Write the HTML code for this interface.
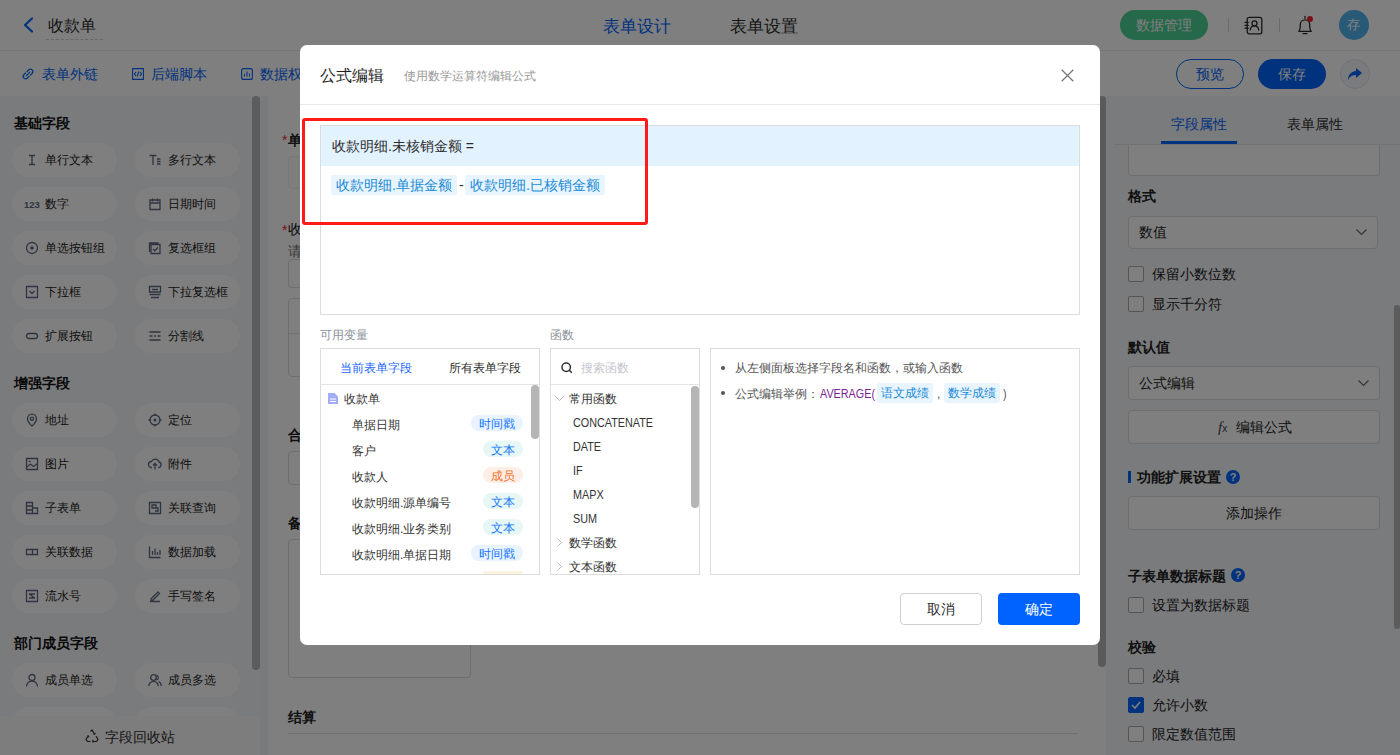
<!DOCTYPE html>
<html><head><meta charset="utf-8">
<style>
*{box-sizing:border-box;margin:0;padding:0}
html,body{width:1400px;height:755px;overflow:hidden;background:#fff}
body{font-family:"Liberation Sans",sans-serif;color:#2c2c2c;position:relative}
.a{position:absolute}
.t{position:absolute;white-space:nowrap}
svg{position:absolute;overflow:visible}
#hdr{left:0;top:0;width:1400px;height:51px;background:#fff;border-bottom:1px solid #ececec}
#tb{left:0;top:51px;width:1400px;height:45px;background:#fff;box-shadow:0 1px 2px rgba(0,0,0,.04)}
#lp{left:0;top:96px;width:260px;height:659px;background:#f5f6fa}
#lstrip{left:260px;top:96px;width:8px;height:659px;background:#f3f4f7}
#lsb{left:252px;top:96px;width:8px;height:574px;background:#b8b8b8;border-radius:4px}
#canvas{left:268px;top:96px;width:830px;height:659px;background:#fff}
#csb{left:1098px;top:96px;width:8px;height:571px;background:#b4b4b4;border-radius:4px}
#rp{left:1106px;top:96px;width:294px;height:659px;background:#f5f6fa}
#rsb{left:1394px;top:305px;width:6px;height:324px;background:#b8b8b8;border-radius:3px}
.pill{position:absolute;width:105px;height:34px;border-radius:17px;background:#fff}
.pt{position:absolute;font-size:12px;line-height:34px;height:34px;white-space:nowrap;color:#222}
.sec{position:absolute;font-size:14px;font-weight:bold;line-height:20px;white-space:nowrap;color:#111}
.ico{position:absolute;width:14px;height:14px}
#mask{left:0;top:0;width:1400px;height:755px;background:rgba(0,0,0,.5)}
#modal{left:300px;top:45px;width:800px;height:600px;background:#fff;border-radius:7px}
.box{position:absolute;border:1px solid #dcdcdc;background:#fff}
.chip{position:absolute;height:20px;line-height:20px;padding:0 5px;background:#e8f4fe;color:#1a8bd6;font-size:14px;border-radius:2px;white-space:nowrap}
.tag{position:absolute;height:16px;line-height:18px;overflow:hidden;border-radius:8px;font-size:12px;text-align:center;white-space:nowrap}
.vr{position:absolute;left:352px;font-size:12px;line-height:20px;color:#333;white-space:nowrap}
.fn{position:absolute;font-size:12px;line-height:20px;color:#333;white-space:nowrap}
.cb{position:absolute;width:16px;height:16px;border:1px solid #aaa;border-radius:2px;background:#fff}
.rt{position:absolute;font-size:14px;line-height:20px;color:#222;white-space:nowrap}
.rb{position:absolute;font-size:14px;font-weight:bold;line-height:20px;color:#222;white-space:nowrap}
.lat{display:inline-block;transform:scaleX(0.9);transform-origin:0 50%}
.inp{position:absolute;border:1px solid #dcdcdc;border-radius:4px;background:#fff}
</style></head>
<body>

<div id="hdr" class="a"></div>
<svg style="left:22px;top:17px" width="12" height="16" viewBox="0 0 12 16"><path d="M10 1.5 L3 8 L10 14.5" fill="none" stroke="#0064fa" stroke-width="2.2" stroke-linecap="round" stroke-linejoin="round"/></svg>
<div class="t" style="left:48px;top:16px;font-size:16px;line-height:20px;color:#2c2c2c">收款单</div>
<div class="a" style="left:46px;top:39px;width:57px;height:0;border-top:1px dashed #d0d0d0"></div>
<div class="t" style="left:603px;top:18px;font-size:17px;line-height:18px;color:#0064fa">表单设计</div>
<div class="t" style="left:730px;top:18px;font-size:17px;line-height:18px;color:#2c2c2c">表单设置</div>
<div class="a" style="left:1120px;top:10px;width:88px;height:30px;border-radius:15px;background:#4ad094"></div>
<div class="t" style="left:1136px;top:15px;font-size:14px;line-height:20px;color:#fff">数据管理</div>
<div class="a" style="left:1228px;top:18px;width:1px;height:14px;background:#d8d8d8"></div>
<div class="a" style="left:1279px;top:18px;width:1px;height:14px;background:#d8d8d8"></div>
<svg style="left:1244px;top:16px" width="19" height="19" viewBox="0 0 19 19"><rect x="3.2" y="1.4" width="14.6" height="16.4" rx="2" fill="none" stroke="#2a2a2a" stroke-width="1.3"/><circle cx="10.5" cy="7.3" r="2.5" fill="none" stroke="#2a2a2a" stroke-width="1.3"/><path d="M6.3 14a4.2 4.2 0 0 1 8.4 0M1 6.4h3.2M1 9.3h3.2M1 12.2h3.2" fill="none" stroke="#2a2a2a" stroke-width="1.3" stroke-linecap="round"/></svg>
<svg style="left:1297px;top:15px" width="16" height="20" viewBox="0 0 16 20"><path d="M1.8 16.3C3.2 15.2 3.3 13 3.3 9.5a4.7 4.7 0 0 1 9.4 0c0 3.5 0.1 5.7 1.5 6.8z" fill="none" stroke="#2a2a2a" stroke-width="1.3" stroke-linejoin="round"/><path d="M8 1.3v2M6 18.6h4" fill="none" stroke="#2a2a2a" stroke-width="1.3" stroke-linecap="round"/></svg>
<div class="a" style="left:1307px;top:16px;width:6px;height:6px;border-radius:50%;background:#f5222d"></div>
<div class="a" style="left:1339px;top:10px;width:30px;height:30px;border-radius:15px;background:#50b2ee"></div>
<div class="t" style="left:1347px;top:15px;font-size:13px;line-height:20px;color:#fff">存</div>

<div id="tb" class="a"></div>
<svg style="left:22px;top:68px" width="12" height="12" viewBox="0 0 12 12"><path d="M5 3.5l1.6-1.6a2.4 2.4 0 0 1 3.5 3.5L8.5 7M7 8.5L5.4 10.1a2.4 2.4 0 0 1-3.5-3.5L3.5 5M4.2 7.8l3.6-3.6" fill="none" stroke="#0064fa" stroke-width="1.2" stroke-linecap="round"/></svg>
<div class="t" style="left:42px;top:64px;font-size:14px;line-height:20px;color:#0064fa">表单外链</div>
<svg style="left:132px;top:68px" width="12" height="12" viewBox="0 0 12 12"><path d="M0.6 0.6h10.8v10.8H0.6zM4 4L2.5 6 4 8M8 4l1.5 2L8 8M6.8 3.5L5.2 8.5" fill="none" stroke="#0064fa" stroke-width="1.1"/></svg>
<div class="t" style="left:151px;top:64px;font-size:14px;line-height:20px;color:#0064fa">后端脚本</div>
<svg style="left:241px;top:68px" width="12" height="12" viewBox="0 0 12 12"><rect x="0.6" y="0.6" width="10.8" height="10.8" rx="2" fill="none" stroke="#0064fa" stroke-width="1.1"/><path d="M3.5 8.5V6M6 8.5V3.5M8.5 8.5V5.5" fill="none" stroke="#0064fa" stroke-width="1.1"/></svg>
<div class="t" style="left:260px;top:64px;font-size:14px;line-height:20px;color:#0064fa">数据权限</div>
<div class="a" style="left:1176px;top:59px;width:68px;height:30px;border-radius:15px;border:1px solid #0064fa;background:#fff"></div>
<div class="t" style="left:1196px;top:64px;font-size:14px;line-height:20px;color:#0064fa">预览</div>
<div class="a" style="left:1258px;top:59px;width:68px;height:30px;border-radius:15px;background:#0064fa"></div>
<div class="t" style="left:1278px;top:64px;font-size:14px;line-height:20px;color:#fff">保存</div>
<div class="a" style="left:1340px;top:59px;width:30px;height:30px;border-radius:15px;border:1px solid #dfe3ee;background:#f4f6fb"></div>
<svg style="left:1347px;top:67px" width="16" height="14" viewBox="0 0 16 14"><path d="M9 1l6 5-6 5V8C5 8 2.5 9.5 1 13c0-5 3-8.5 8-9z" fill="#0064fa"/></svg>

<div id="lp" class="a"></div>
<div id="lstrip" class="a"></div>
<div id="lsb" class="a"></div>
<div class="sec" style="left:14px;top:113px">基础字段</div>
<div class="sec" style="left:14px;top:373px">增强字段</div>
<div class="sec" style="left:14px;top:633px">部门成员字段</div>

<div class="pill" style="left:12px;top:143px"></div>
<svg class="ico" style="left:25px;top:153px" width="14" height="14" viewBox="0 0 14 14"><path d="M4 2.5h6M4 11.5h6M7 2.5v9" fill="none" stroke="#5d6a80" stroke-width="1.3"/></svg>
<div class="pt" style="left:45px;top:143px">单行文本</div>
<div class="pill" style="left:135px;top:143px"></div>
<svg class="ico" style="left:148px;top:153px" width="14" height="14" viewBox="0 0 14 14"><path d="M1.5 2.5h7M5 2.5v9.5M9 6h3.5M9 8.5h3.5M9 11h3.5" fill="none" stroke="#5d6a80" stroke-width="1.3"/></svg>
<div class="pt" style="left:168px;top:143px">多行文本</div>
<div class="pill" style="left:12px;top:187px"></div>
<svg class="ico" style="left:25px;top:197px" width="14" height="14" viewBox="0 0 14 14"><text x="-1" y="10.5" font-size="9.5" font-weight="bold" fill="#5d6a80" font-family="Liberation Sans">123</text></svg>
<div class="pt" style="left:45px;top:187px">数字</div>
<div class="pill" style="left:135px;top:187px"></div>
<svg class="ico" style="left:148px;top:197px" width="14" height="14" viewBox="0 0 14 14"><path d="M2 3h10v9.5H2zM2 6h10M4.5 1.5v3M9.5 1.5v3" fill="none" stroke="#5d6a80" stroke-width="1.3"/></svg>
<div class="pt" style="left:168px;top:187px">日期时间</div>
<div class="pill" style="left:12px;top:231px"></div>
<svg class="ico" style="left:25px;top:241px" width="14" height="14" viewBox="0 0 14 14"><circle cx="7" cy="7" r="5.5" fill="none" stroke="#5d6a80" stroke-width="1.3"/><circle cx="7" cy="7" r="1.8" fill="#5d6a80"/></svg>
<div class="pt" style="left:45px;top:231px">单选按钮组</div>
<div class="pill" style="left:135px;top:231px"></div>
<svg class="ico" style="left:148px;top:241px" width="14" height="14" viewBox="0 0 14 14"><path d="M3 3.5h9v9H3zM1.5 11V2h9" fill="none" stroke="#5d6a80" stroke-width="1.3"/><path d="M5 8l1.8 1.8L10 6.5" fill="none" stroke="#5d6a80" stroke-width="1.3"/></svg>
<div class="pt" style="left:168px;top:231px">复选框组</div>
<div class="pill" style="left:12px;top:275px"></div>
<svg class="ico" style="left:25px;top:285px" width="14" height="14" viewBox="0 0 14 14"><path d="M1.5 1.5h11v11h-11zM4.5 6l2.5 2.5L9.5 6" fill="none" stroke="#5d6a80" stroke-width="1.3"/></svg>
<div class="pt" style="left:45px;top:275px">下拉框</div>
<div class="pill" style="left:135px;top:275px"></div>
<svg class="ico" style="left:148px;top:285px" width="14" height="14" viewBox="0 0 14 14"><path d="M1.5 1.5h11v5.5h-11zM1.5 9.5h11M4 4.5h6M3 12.5h8" fill="none" stroke="#5d6a80" stroke-width="1.3"/></svg>
<div class="pt" style="left:168px;top:275px">下拉复选框</div>
<div class="pill" style="left:12px;top:319px"></div>
<svg class="ico" style="left:25px;top:329px" width="14" height="14" viewBox="0 0 14 14"><rect x="1.5" y="4.5" width="11" height="5" rx="2.5" fill="none" stroke="#5d6a80" stroke-width="1.3"/></svg>
<div class="pt" style="left:45px;top:319px">扩展按钮</div>
<div class="pill" style="left:135px;top:319px"></div>
<svg class="ico" style="left:148px;top:329px" width="14" height="14" viewBox="0 0 14 14"><path d="M1.5 3h11M1.5 7h3M6 7h2M9.5 7h3M1.5 11h11" fill="none" stroke="#5d6a80" stroke-width="1.3"/></svg>
<div class="pt" style="left:168px;top:319px">分割线</div>
<div class="pill" style="left:12px;top:403px"></div>
<svg class="ico" style="left:25px;top:413px" width="14" height="14" viewBox="0 0 14 14"><path d="M7 13s-4.5-4.2-4.5-7.3A4.5 4.5 0 0 1 11.5 5.7C11.5 8.8 7 13 7 13z" fill="none" stroke="#5d6a80" stroke-width="1.3"/><circle cx="7" cy="5.8" r="1.6" fill="none" stroke="#5d6a80" stroke-width="1.3"/></svg>
<div class="pt" style="left:45px;top:403px">地址</div>
<div class="pill" style="left:135px;top:403px"></div>
<svg class="ico" style="left:148px;top:413px" width="14" height="14" viewBox="0 0 14 14"><circle cx="7" cy="7" r="5" fill="none" stroke="#5d6a80" stroke-width="1.3"/><circle cx="7" cy="7" r="1.5" fill="#5d6a80"/><path d="M7 0.5v2.5M7 11v2.5M0.5 7h2.5M11 7h2.5" fill="none" stroke="#5d6a80" stroke-width="1.3"/></svg>
<div class="pt" style="left:168px;top:403px">定位</div>
<div class="pill" style="left:12px;top:447px"></div>
<svg class="ico" style="left:25px;top:457px" width="14" height="14" viewBox="0 0 14 14"><path d="M1.5 1.5h11v11h-11z" fill="none" stroke="#5d6a80" stroke-width="1.3"/><path d="M2 10l3.5-3 3 2.5 4-3" fill="none" stroke="#5d6a80" stroke-width="1.3"/><path d="M3.5 4.5h2" fill="none" stroke="#5d6a80" stroke-width="1.3"/></svg>
<div class="pt" style="left:45px;top:447px">图片</div>
<div class="pill" style="left:135px;top:447px"></div>
<svg class="ico" style="left:148px;top:457px" width="14" height="14" viewBox="0 0 14 14"><path d="M4 10.5H3.5a3 3 0 0 1 0-6 4 4 0 0 1 7.5 0.5 2.8 2.8 0 0 1-0.5 5.5H10M7 12.5V6.5M5 8.5l2-2 2 2" fill="none" stroke="#5d6a80" stroke-width="1.3"/></svg>
<div class="pt" style="left:168px;top:447px">附件</div>
<div class="pill" style="left:12px;top:491px"></div>
<svg class="ico" style="left:25px;top:501px" width="14" height="14" viewBox="0 0 14 14"><path d="M1.5 1.5h6v11h-6zM7.5 7h5v5.5h-5M1.5 5h6M1.5 9h6" fill="none" stroke="#5d6a80" stroke-width="1.3"/></svg>
<div class="pt" style="left:45px;top:491px">子表单</div>
<div class="pill" style="left:135px;top:491px"></div>
<svg class="ico" style="left:148px;top:501px" width="14" height="14" viewBox="0 0 14 14"><path d="M1.5 1.5h11v11h-11z" fill="none" stroke="#5d6a80" stroke-width="1.3"/><path d="M4 4h4v3H4zM7 7h3v3H7" fill="none" stroke="#5d6a80" stroke-width="1.3"/></svg>
<div class="pt" style="left:168px;top:491px">关联查询</div>
<div class="pill" style="left:12px;top:535px"></div>
<svg class="ico" style="left:25px;top:545px" width="14" height="14" viewBox="0 0 14 14"><path d="M1.5 4.5h6v5h-6zM6.5 4.5h6v5h-6" fill="none" stroke="#5d6a80" stroke-width="1.3"/></svg>
<div class="pt" style="left:45px;top:535px">关联数据</div>
<div class="pill" style="left:135px;top:535px"></div>
<svg class="ico" style="left:148px;top:545px" width="14" height="14" viewBox="0 0 14 14"><path d="M1.5 1.5v11h11M4.5 10V6M7 10V3.5M9.5 10V7M12 10V5" fill="none" stroke="#5d6a80" stroke-width="1.3"/></svg>
<div class="pt" style="left:168px;top:535px">数据加载</div>
<div class="pill" style="left:12px;top:579px"></div>
<svg class="ico" style="left:25px;top:589px" width="14" height="14" viewBox="0 0 14 14"><path d="M1.5 1.5h11v11h-11zM4 5h6M4 9h6M4 5l6 4" fill="none" stroke="#5d6a80" stroke-width="1.3"/></svg>
<div class="pt" style="left:45px;top:579px">流水号</div>
<div class="pill" style="left:135px;top:579px"></div>
<svg class="ico" style="left:148px;top:589px" width="14" height="14" viewBox="0 0 14 14"><path d="M2 12.5h10M3 10l7-7 1.5 1.5-7 7H3z" fill="none" stroke="#5d6a80" stroke-width="1.3"/></svg>
<div class="pt" style="left:168px;top:579px">手写签名</div>
<div class="pill" style="left:12px;top:663px"></div>
<svg class="ico" style="left:25px;top:673px" width="14" height="14" viewBox="0 0 14 14"><circle cx="7" cy="4.5" r="3" fill="none" stroke="#5d6a80" stroke-width="1.3"/><path d="M1.5 13.5a5.5 5.5 0 0 1 11 0" fill="none" stroke="#5d6a80" stroke-width="1.3"/></svg>
<div class="pt" style="left:45px;top:663px">成员单选</div>
<div class="pill" style="left:135px;top:663px"></div>
<svg class="ico" style="left:148px;top:673px" width="14" height="14" viewBox="0 0 14 14"><circle cx="5.5" cy="4.5" r="2.8" fill="none" stroke="#5d6a80" stroke-width="1.3"/><path d="M0.8 13a4.7 4.7 0 0 1 9.4 0M8.5 2a2.8 2.8 0 0 1 0 5.2M10.5 8.5a4.7 4.7 0 0 1 2.7 4.5" fill="none" stroke="#5d6a80" stroke-width="1.3"/></svg>
<div class="pt" style="left:168px;top:663px">成员多选</div>
<div class="pill" style="left:12px;top:707px"></div>
<svg class="ico" style="left:25px;top:717px" width="14" height="14" viewBox="0 0 14 14"><circle cx="7" cy="4.5" r="3" fill="none" stroke="#5d6a80" stroke-width="1.3"/><path d="M1.5 13.5a5.5 5.5 0 0 1 11 0" fill="none" stroke="#5d6a80" stroke-width="1.3"/></svg>
<div class="pt" style="left:45px;top:707px">部门单选</div>
<div class="pill" style="left:135px;top:707px"></div>
<svg class="ico" style="left:148px;top:717px" width="14" height="14" viewBox="0 0 14 14"><circle cx="5.5" cy="4.5" r="2.8" fill="none" stroke="#5d6a80" stroke-width="1.3"/><path d="M0.8 13a4.7 4.7 0 0 1 9.4 0M8.5 2a2.8 2.8 0 0 1 0 5.2M10.5 8.5a4.7 4.7 0 0 1 2.7 4.5" fill="none" stroke="#5d6a80" stroke-width="1.3"/></svg>
<div class="pt" style="left:168px;top:707px">部门多选</div>
<div class="a" style="left:0;top:716px;width:260px;height:39px;background:#fbfbfc"></div>
<svg style="left:85px;top:729px" width="14" height="14" viewBox="0 0 14 14"><path d="M5.5 2.5L7 1l2.5 4M11 7l2 3.5-1.5 2H8.5M5.5 12.5H2.5L1 10.5 3 7M10.5 4.2L9.5 5l-1.2-.2M7.5 11l1 1.5-1 1M2.5 6.5l.8 0.5.4 1.2" fill="none" stroke="#333" stroke-width="1.2"/></svg>
<div class="t" style="left:105px;top:727px;font-size:14px;line-height:20px;color:#2c2c2c">字段回收站</div>

<div id="canvas" class="a"></div>
<div class="t" style="left:282px;top:130px;font-size:14px;line-height:20px;color:#f5222d">*</div>
<div class="rb" style="left:288px;top:130px">单据日期</div>
<div class="inp" style="left:288px;top:156px;width:400px;height:33px;border-color:#f0f0f0;background:#fcfcfc"></div>
<div class="t" style="left:282px;top:220px;font-size:14px;line-height:20px;color:#f5222d">*</div>
<div class="rt" style="left:288px;top:219px;color:#111">收款明细</div>
<div class="t" style="left:288px;top:241px;font-size:14px;line-height:20px;color:#777">请</div>
<div class="inp" style="left:288px;top:259px;width:790px;height:29px"></div>
<div class="inp" style="left:288px;top:298px;width:790px;height:79px"></div>
<div class="a" style="left:289px;top:333px;width:788px;height:1px;background:#e6e6e6"></div>
<div class="rb" style="left:288px;top:425px">合计</div>
<div class="inp" style="left:288px;top:451px;width:400px;height:34px"></div>
<div class="rb" style="left:288px;top:513px">备注</div>
<div class="inp" style="left:288px;top:539px;width:183px;height:139px"></div>
<div class="rb" style="left:288px;top:707px">结算</div>
<div class="a" style="left:288px;top:733px;width:790px;height:1px;background:#e3e3e3"></div>
<div id="csb" class="a"></div>

<div id="rp" class="a"></div>
<div class="a" style="left:1114px;top:144px;width:286px;height:1px;background:#e4e4e4"></div>
<div class="t" style="left:1171px;top:114px;font-size:14px;line-height:20px;color:#0064fa">字段属性</div>
<div class="a" style="left:1161px;top:141px;width:76px;height:3px;background:#0064fa"></div>
<div class="t" style="left:1287px;top:114px;font-size:14px;line-height:20px;color:#2c2c2c">表单属性</div>
<div class="inp" style="left:1128px;top:145px;width:252px;height:31px;border-top:0;border-radius:0 0 4px 4px"></div>
<div class="rb" style="left:1128px;top:186px">格式</div>
<div class="inp" style="left:1128px;top:216px;width:250px;height:33px"></div>
<div class="rt" style="left:1139px;top:222px">数值</div>
<svg style="left:1356px;top:229px" width="11" height="6" viewBox="0 0 11 6"><path d="M0.5 0.5l5 5 5-5" fill="none" stroke="#666" stroke-width="1.2"/></svg>
<div class="cb" style="left:1128px;top:266px"></div>
<div class="rt" style="left:1152px;top:264px">保留小数位数</div>
<div class="cb" style="left:1128px;top:296px"></div>
<div class="rt" style="left:1152px;top:294px">显示千分符</div>
<div class="rb" style="left:1128px;top:337px">默认值</div>
<div class="inp" style="left:1128px;top:366px;width:252px;height:34px"></div>
<div class="rt" style="left:1139px;top:373px">公式编辑</div>
<svg style="left:1358px;top:380px" width="11" height="6" viewBox="0 0 11 6"><path d="M0.5 0.5l5 5 5-5" fill="none" stroke="#666" stroke-width="1.2"/></svg>
<div class="inp" style="left:1128px;top:410px;width:252px;height:34px"></div>
<div class="t" style="left:1218px;top:417px;font-size:15px;line-height:20px;font-style:italic;font-family:'Liberation Serif',serif;color:#444">f<span style="font-size:10px;font-style:normal;font-family:'Liberation Sans'">x</span></div>
<div class="rt" style="left:1236px;top:417px">编辑公式</div>
<div class="a" style="left:1128px;top:471px;width:3px;height:12px;background:#0064fa"></div>
<div class="rb" style="left:1137px;top:467px">功能扩展设置</div>
<div class="a" style="left:1226px;top:470px;width:14px;height:14px;border-radius:7px;background:#0064fa;color:#fff;font-size:11px;line-height:14px;text-align:center;font-weight:bold">?</div>
<div class="inp" style="left:1128px;top:496px;width:252px;height:34px"></div>
<div class="rt" style="left:1226px;top:503px">添加操作</div>
<div class="rb" style="left:1128px;top:566px">子表单数据标题</div>
<div class="a" style="left:1231px;top:568px;width:14px;height:14px;border-radius:7px;background:#0064fa;color:#fff;font-size:11px;line-height:14px;text-align:center;font-weight:bold">?</div>
<div class="cb" style="left:1128px;top:597px"></div>
<div class="rt" style="left:1152px;top:595px">设置为数据标题</div>
<div class="rb" style="left:1128px;top:637px">校验</div>
<div class="cb" style="left:1128px;top:668px"></div>
<div class="rt" style="left:1152px;top:666px">必填</div>
<div class="cb" style="left:1128px;top:697px;background:#0064fa;border-color:#0064fa"></div>
<svg style="left:1131px;top:701px" width="10" height="8" viewBox="0 0 10 8"><path d="M1 4l3 3 5-6" fill="none" stroke="#fff" stroke-width="1.6"/></svg>
<div class="rt" style="left:1152px;top:695px">允许小数</div>
<div class="cb" style="left:1128px;top:726px"></div>
<div class="rt" style="left:1152px;top:724px">限定数值范围</div>
<div id="rsb" class="a"></div>
<div id="mask" class="a"></div>

<div id="modal" class="a"></div>
<div class="t" style="left:320px;top:66px;font-size:16px;line-height:20px;color:#1f1f1f">公式编辑</div>
<div class="t" style="left:404px;top:67px;font-size:12px;line-height:18px;color:#999">使用数学运算符编辑公式</div>
<svg style="left:1061px;top:69px" width="13" height="13" viewBox="0 0 13 13"><path d="M0.7 0.7l11.6 11.6M12.3 0.7L0.7 12.3" fill="none" stroke="#777" stroke-width="1.3"/></svg>
<div class="a" style="left:300px;top:104px;width:800px;height:1px;background:#e8e8e8"></div>
<!-- editor -->
<div class="box" style="left:320px;top:125px;width:760px;height:190px"></div>
<div class="a" style="left:321px;top:126px;width:758px;height:40px;background:#e3f2ff"></div>
<div class="t" style="left:332px;top:136px;font-size:14px;line-height:20px;color:#2c2c2c">收款明细.未核销金额 =</div>
<div class="chip" style="left:331px;top:175px">收款明细.单据金额</div>
<div class="t" style="left:459px;top:175px;font-size:14px;line-height:20px;color:#333">-</div>
<div class="chip" style="left:465px;top:175px">收款明细.已核销金额</div>
<div class="a" style="left:302px;top:118px;width:346px;height:107px;border:3px solid #ff1a1a;border-radius:3px"></div>
<!-- labels -->
<div class="t" style="left:320px;top:325px;font-size:12px;line-height:20px;color:#8a9099">可用变量</div>
<div class="t" style="left:550px;top:325px;font-size:12px;line-height:20px;color:#8a9099">函数</div>
<!-- variables -->
<div class="box" style="left:320px;top:348px;width:220px;height:227px"></div>
<div class="a" style="left:321px;top:384px;width:218px;height:1px;background:#e4e4e4"></div>
<div class="t" style="left:340px;top:358px;font-size:12px;line-height:20px;color:#1a66ff">当前表单字段</div>
<div class="t" style="left:449px;top:358px;font-size:12px;line-height:20px;color:#2c2c2c">所有表单字段</div>
<div class="a" style="left:531px;top:385px;width:8px;height:54px;background:#b5b5b5;border-radius:4px"></div>
<svg style="left:328px;top:393px" width="10" height="11" viewBox="0 0 10 11"><path d="M0 0h6.5L10 3.5V11H0z" fill="#a3acf7"/><path d="M2 6h6M2 8.5h6" stroke="#fff" stroke-width="1"/></svg>
<div class="vr" style="left:344px;top:389px">收款单</div>
<div class="vr" style="top:415px">单据日期</div>
<div class="vr" style="top:441px">客户</div>
<div class="vr" style="top:467px">收款人</div>
<div class="vr" style="top:493px">收款明细.源单编号</div>
<div class="vr" style="top:519px">收款明细.业务类别</div>
<div class="vr" style="top:545px">收款明细.单据日期</div>
<div class="tag" style="left:471px;top:415px;width:52px;background:#e8f3ff;color:#1677ff">时间戳</div>
<div class="tag" style="left:483px;top:441px;width:40px;background:#e6f7f6;color:#1677ff">文本</div>
<div class="tag" style="left:483px;top:467px;width:40px;background:#fdeee6;color:#f5702a">成员</div>
<div class="tag" style="left:483px;top:493px;width:40px;background:#e6f7f6;color:#1677ff">文本</div>
<div class="tag" style="left:483px;top:519px;width:40px;background:#e6f7f6;color:#1677ff">文本</div>
<div class="tag" style="left:471px;top:545px;width:52px;background:#e8f3ff;color:#1677ff">时间戳</div>
<div class="tag" style="left:483px;top:571px;width:40px;height:3px;background:#fdf3e0"></div>
<!-- functions -->
<div class="box" style="left:550px;top:348px;width:150px;height:227px"></div>
<div class="a" style="left:551px;top:384px;width:148px;height:1px;background:#e4e4e4"></div>
<svg style="left:561px;top:362px" width="12" height="12" viewBox="0 0 12 12"><circle cx="5.2" cy="5.2" r="4.2" fill="none" stroke="#333" stroke-width="1.5"/><path d="M8.3 8.3l2.5 2.5" stroke="#333" stroke-width="1.6"/></svg>
<div class="t" style="left:581px;top:358px;font-size:12px;line-height:20px;color:#c4c7cc">搜索函数</div>
<div class="a" style="left:691px;top:386px;width:8px;height:122px;background:#b5b5b5;border-radius:4px"></div>
<svg style="left:554px;top:395px" width="11" height="7" viewBox="0 0 11 7"><path d="M0.5 0.5l5 5 5-5" fill="none" stroke="#bbb" stroke-width="1"/></svg>
<div class="fn" style="left:569px;top:389px">常用函数</div>
<div class="fn" style="left:573px;top:413px"><span class="lat">CONCATENATE</span></div>
<div class="fn" style="left:573px;top:437px"><span class="lat">DATE</span></div>
<div class="fn" style="left:573px;top:461px"><span class="lat">IF</span></div>
<div class="fn" style="left:573px;top:485px"><span class="lat">MAPX</span></div>
<div class="fn" style="left:573px;top:509px"><span class="lat">SUM</span></div>
<svg style="left:557px;top:538px" width="5" height="9" viewBox="0 0 5 9"><path d="M0.5 0.5l4 4-4 4" fill="none" stroke="#bbb" stroke-width="1"/></svg>
<div class="fn" style="left:569px;top:533px">数学函数</div>
<svg style="left:557px;top:562px" width="5" height="9" viewBox="0 0 5 9"><path d="M0.5 0.5l4 4-4 4" fill="none" stroke="#bbb" stroke-width="1"/></svg>
<div class="fn" style="left:569px;top:557px;height:18px;overflow:hidden">文本函数</div>
<!-- hints -->
<div class="box" style="left:710px;top:348px;width:370px;height:227px"></div>
<div class="a" style="left:721px;top:366px;width:4px;height:4px;border-radius:2px;background:#555"></div>
<div class="t" style="left:735px;top:358px;font-size:12px;line-height:20px;color:#555">从左侧面板选择字段名和函数，或输入函数</div>
<div class="a" style="left:721px;top:391px;width:4px;height:4px;border-radius:2px;background:#555"></div>
<div class="t" style="left:735px;top:384px;font-size:12px;line-height:20px;color:#555">公式编辑举例：</div>
<div class="t lat" style="left:820px;top:384px;font-size:12px;line-height:20px;color:#7b1f93">AVERAGE(</div>
<div class="chip" style="left:877px;top:383px;width:56px;font-size:12px;padding:0 4px;color:#1a8bd6;border-radius:3px">语文成绩</div>
<div class="t" style="left:937px;top:384px;font-size:12px;line-height:20px;color:#555">,</div>
<div class="chip" style="left:944px;top:383px;width:56px;font-size:12px;padding:0 4px;color:#1a8bd6;border-radius:3px">数学成绩</div>
<div class="t lat" style="left:1003px;top:384px;font-size:12px;line-height:20px;color:#555">)</div>
<!-- buttons -->
<div class="a" style="left:900px;top:593px;width:82px;height:32px;border:1px solid #cfcfcf;border-radius:4px;background:#fff"></div>
<div class="t" style="left:927px;top:599px;font-size:14px;line-height:20px;color:#2c2c2c">取消</div>
<div class="a" style="left:998px;top:593px;width:82px;height:32px;border-radius:4px;background:#0062ff"></div>
<div class="t" style="left:1025px;top:599px;font-size:14px;line-height:20px;color:#fff;font-weight:500">确定</div>
</body></html>
